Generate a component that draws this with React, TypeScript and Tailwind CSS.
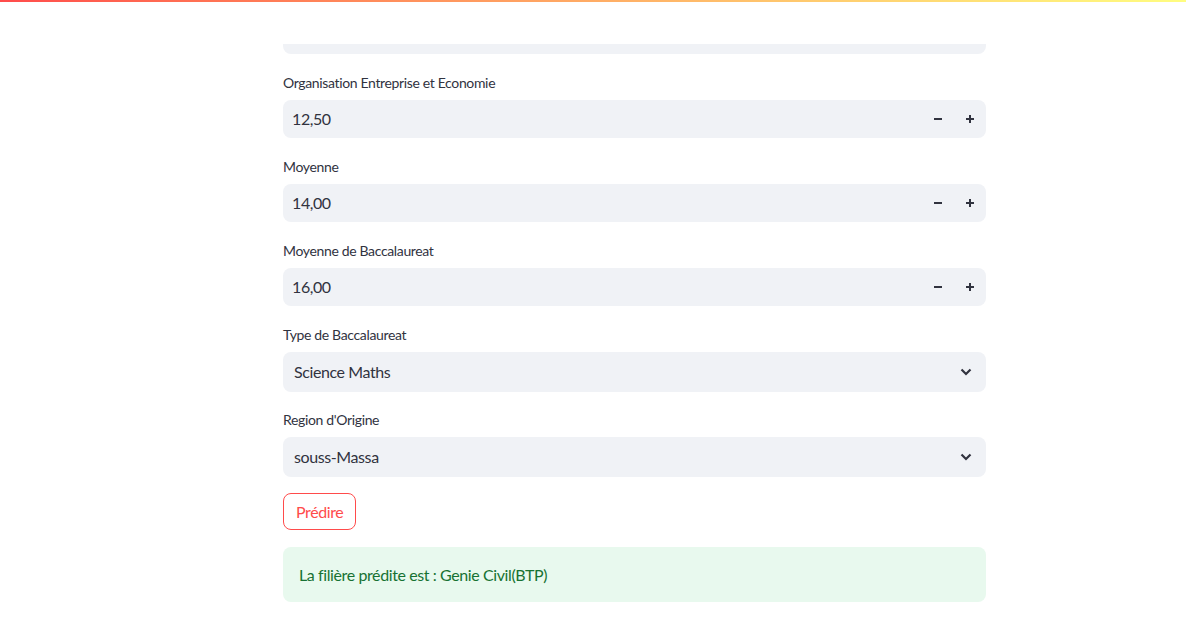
const font = { fontFamily: '"Lato", "Noto Sans", sans-serif' };

function NumberField({ label, value }: { label: string; value: string }) {
  return (
    <div className="mt-[18px]">
      <label className="flex h-6 items-center pb-[3px] text-[14px] tracking-[-0.025em] text-[#31333f]">{label}</label>
      <div className="mt-1 flex h-[38px] items-center rounded-lg bg-[#f0f2f6]">
        <span className="flex-1 pl-[9px] text-[16px] tracking-[-0.025em] text-[#31333f]">{value}</span>
        <button className="flex h-full w-8 items-center justify-center">
          <svg width="10" height="10" viewBox="0 0 10 10">
            <path d="M1 5h8" stroke="#31333f" strokeWidth="2" />
          </svg>
        </button>
        <button className="flex h-full w-8 items-center justify-center">
          <svg width="10" height="10" viewBox="0 0 10 10">
            <path d="M1 5h8M5 1v8" stroke="#31333f" strokeWidth="2" />
          </svg>
        </button>
      </div>
    </div>
  );
}

function SelectField({ label, value, top }: { label: string; value: string; top: string }) {
  return (
    <div className={top}>
      <label className="flex h-6 items-center pb-[3px] text-[14px] tracking-[-0.025em] text-[#31333f]">{label}</label>
      <div className="mt-1 flex h-10 items-center rounded-lg bg-[#f0f2f6] pl-[11px] pr-[14px]">
        <span className="flex-1 text-[16px] tracking-[-0.025em] text-[#31333f]">{value}</span>
        <svg width="12" height="8" viewBox="0 0 12 8">
          <path d="M1.5 1.5l4.5 4.5 4.5-4.5" fill="none" stroke="#31333f" strokeWidth="2.2" />
        </svg>
      </div>
    </div>
  );
}

export default function App() {
  return (
    <div className="min-h-[637px] w-full bg-white" style={font}>
      <div className="h-[2px] w-full bg-gradient-to-r from-[#ff4b4b] to-[#fffd80]" />
      <main className="w-[703px] pb-8" style={{ marginLeft: 283 }}>
        <div className="mt-[42px] h-[10px] rounded-b-lg bg-[#f0f2f6]" />
        <NumberField label="Organisation Entreprise et Economie" value="12,50" />
        <NumberField label="Moyenne" value="14,00" />
        <NumberField label="Moyenne de Baccalaureat" value="16,00" />
        <SelectField label="Type de Baccalaureat" value="Science Maths" top="mt-[18px]" />
        <SelectField label="Region d'Origine" value="souss-Massa" top="mt-[17px]" />
        <button className="mt-4 flex h-[37px] items-center rounded-lg border border-[#ff4b4b] px-3 text-[16px] tracking-[-0.025em] text-[#ff4b4b]">
          Prédire
        </button>
        <div className="mt-[17px] flex h-[55px] items-center rounded-lg bg-[#e8f9ee] px-4 text-[16px] tracking-[-0.025em] text-[#177233]">
          La filière prédite est : Genie Civil(BTP)
        </div>
      </main>
    </div>
  );
}
